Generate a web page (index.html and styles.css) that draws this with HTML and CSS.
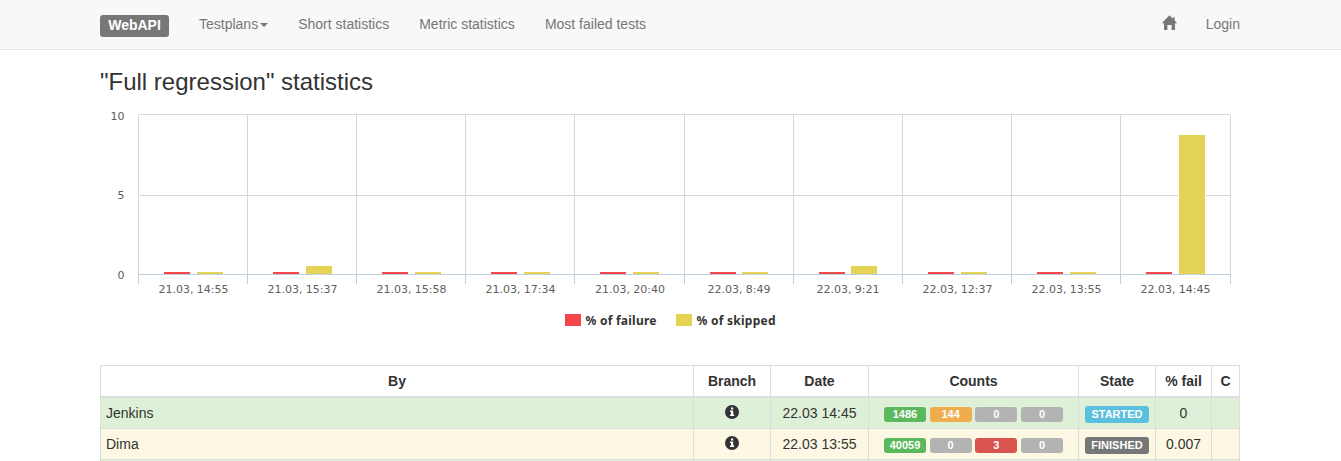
FILE: index.html
```html
<!DOCTYPE html>
<html lang="en">
<head>
<meta charset="utf-8">
<title>WebAPI statistics</title>
<link rel="stylesheet" href="styles.css">
</head>
<body>
<nav class="navbar">
  <div class="container nav-row">
    <a class="brand">WebAPI</a>
    <a class="nav-link">Testplans<span class="caret"></span></a>
    <a class="nav-link">Short statistics</a>
    <a class="nav-link">Metric statistics</a>
    <a class="nav-link">Most failed tests</a>
    <a class="nav-home"><svg width="16" height="16" viewBox="0 0 16 16"><path d="M7.400 .3 10.800 3.700V2.200h1.800v3.300L15 7.900v.4h-2V15H9.600v-5H5.400v5H2V8.300H0v-.4z"/></svg></a>
    <a class="nav-link nav-login">Login</a>
  </div>
</nav>
<main class="container">
  <h3 class="title">"Full regression" statistics</h3>
  <svg class="chart" width="1140" height="240" viewBox="100 100 1140 240">
    <g class="grid">
      <path d="M139 114.5H1230M139 195.5H1230"/>
      <path d="M138.5 115V274M247.500 115V274M356.500 115V274M465.500 115V274M574.500 115V274M684.500 115V274M793.500 115V274M902.500 115V274M1011.500 115V274M1120.500 115V274M1230.500 115V274"/>
    </g>
    <g class="fail">
      <path d="M164 272h26v2h-26zM273 272h26v2h-26zM382 272h26v2h-26zM491 272h26v2h-26zM600 272h26v2h-26zM710 272h26v2h-26zM819 272h26v2h-26zM928 272h26v2h-26zM1037 272h26v2h-26zM1146 272h26v2h-26z"/>
      <rect x="565" y="314" width="16" height="12"/>
    </g>
    <rect class="halo" x="1178" y="134" width="28" height="140"/>
    <g class="skip">
      <path d="M197 272h26v2h-26zM306 266h26v8h-26zM415 272h26v2h-26zM524 272h26v2h-26zM633 272h26v2h-26zM742 272h26v2h-26zM851 266h26v8h-26zM961 272h26v2h-26zM1070 272h26v2h-26zM1179 135h26v139h-26z"/>
      <rect x="676" y="314" width="16" height="12"/>
    </g>
    <path class="axis" d="M138 274.500H1231M138.500 274V284M247.500 274V284M356.500 274V284M465.500 274V284M574.500 274V284M684.500 274V284M793.500 274V284M902.500 274V284M1011.500 274V284M1120.500 274V284M1230.500 274V284"/>
    <g class="y-labels">
      <text x="124.500" y="120">10</text><text x="124.500" y="199">5</text><text x="124.500" y="279">0</text>
    </g>
    <g class="x-labels">
      <text x="158.500" y="293" textLength="70">21.03, 14:55</text>
      <text x="267.500" y="293" textLength="70">21.03, 15:37</text>
      <text x="376.500" y="293" textLength="70">21.03, 15:58</text>
      <text x="485.500" y="293" textLength="70">21.03, 17:34</text>
      <text x="595" y="293" textLength="70">21.03, 20:40</text>
      <text x="707.500" y="293" textLength="63">22.03, 8:49</text>
      <text x="816.500" y="293" textLength="63">22.03, 9:21</text>
      <text x="922.500" y="293" textLength="70">22.03, 12:37</text>
      <text x="1031.500" y="293" textLength="70">22.03, 13:55</text>
      <text x="1140.500" y="293" textLength="70">22.03, 14:45</text>
    </g>
    <g class="legend">
      <text x="585.500" y="325" textLength="71">% of failure</text>
      <text x="696.500" y="325" textLength="79">% of skipped</text>
    </g>
  </svg>
  <table class="results">
    <colgroup><col class="c-by"><col class="c-branch"><col class="c-date"><col class="c-counts"><col class="c-state"><col class="c-fail"><col class="c-last"></colgroup>
    <thead><tr><th>By</th><th>Branch</th><th>Date</th><th>Counts</th><th>State</th><th>% fail</th><th>C</th></tr></thead>
    <tbody>
      <tr class="success">
        <td class="by">Jenkins</td>
        <td><svg class="info" width="14" height="14" viewBox="0 0 14 14"><circle cx="7" cy="7" r="7"/><path d="M6 2.500h2.200v2H6zM5 5.500h3.200v4h1V11H5V9.500h1V7H5z"/></svg></td>
        <td>22.03 14:45</td>
        <td><div class="counts"><span class="label green">1486</span><span class="label orange">144</span><span class="label">0</span><span class="label">0</span></div></td>
        <td><span class="state started">STARTED</span></td>
        <td>0</td><td></td>
      </tr>
      <tr class="warning">
        <td class="by">Dima</td>
        <td><svg class="info" width="14" height="14" viewBox="0 0 14 14"><circle cx="7" cy="7" r="7"/><path d="M6 2.500h2.200v2H6zM5 5.500h3.200v4h1V11H5V9.500h1V7H5z"/></svg></td>
        <td>22.03 13:55</td>
        <td><div class="counts"><span class="label green">40059</span><span class="label">0</span><span class="label red">3</span><span class="label">0</span></div></td>
        <td><span class="state">FINISHED</span></td>
        <td>0.007</td><td></td>
      </tr>
      <tr class="success partial"><td></td><td></td><td></td><td></td><td></td><td></td><td></td></tr>
    </tbody>
  </table>
</main>
</body>
</html>
```
FILE: styles.css
```css
* { box-sizing: border-box; }
html { height: 100%; overflow: hidden; }
body { margin: 0; height: 461px; overflow: hidden; background: #fff; color: #333; font: 14px/20px "Liberation Sans", Arial, sans-serif; }
.container { width: 1140px; margin-left: 100px; }
.navbar { height: 50px; background: #f8f8f8; border-bottom: 1px solid #e7e7e7; color: #777; }
.nav-row { display: flex; align-items: flex-start; }
.brand { width: 69px; height: 22px; margin: 15px 15px 0 0; border-radius: 3px; background: #777; color: #fff; font-size: 14px; line-height: 20px; font-weight: bold; text-align: center; }
.nav-link { padding: 14px 15px 0; white-space: nowrap; }
.caret { display: inline-block; margin-left: 2px; vertical-align: middle; border-top: 4px solid #777; border-left: 4px solid transparent; border-right: 4px solid transparent; }
.nav-home { margin: 15px 13px 0 auto; height: 16px; fill: #777; }
.nav-home svg { display: block; }
.nav-login { padding-right: 0; }
.title { margin: 19px 0 5px; font-size: 24px; line-height: 26px; font-weight: normal; }
.chart { display: block; font-family: "Noto Sans", "DejaVu Sans", sans-serif; }
.grid { fill: none; stroke: #d8d8d8; }
.axis { fill: none; stroke: #c0d0e0; }
.fail { fill: #f7464a; }
.skip { fill: #e5d355; }
.halo { fill: #fff; }
.y-labels, .x-labels { font-family: "DejaVu Sans", sans-serif; font-size: 11px; fill: #606060; }
.y-labels { text-anchor: end; }
.legend { font-size: 12px; font-weight: bold; fill: #333; }
.results { width: 1140px; margin-top: 25px; table-layout: fixed; border-collapse: collapse; text-align: center; }
.results th, .results td { height: 31px; padding: 5px; border: 1px solid #ddd; white-space: nowrap; vertical-align: top; line-height: 20px; }
.results th { border-bottom-width: 2px; }
.results .by { text-align: left; }
.results .partial td { height: 1px; padding: 0; border-bottom: 0; }
.c-by { width: 593px; }
.c-branch, .c-state { width: 77px; }
.c-date { width: 98px; }
.c-counts { width: 210px; }
.c-fail { width: 56px; }
.c-last { width: 28px; }
.success { background: #dff0d8; }
.warning { background: #fcf8e3; }
.info { display: block; margin: 2px auto 0; fill: #333; }
.info path { fill: #fff; }
.counts { display: flex; justify-content: center; gap: 3.700px; padding-top: 4px; }
.label { width: 42px; height: 15px; border-radius: 3px; background: #b3b3b3; color: #fff; font-size: 11px; line-height: 15px; font-weight: bold; }
.green { background: #5cb85c; }
.orange { background: #f0ad4e; }
.red { background: #d9534f; }
.state { display: block; width: 64px; height: 17px; margin: 3px auto 0; border-radius: 3px; background: #777; color: #fff; font-size: 11px; line-height: 17px; font-weight: bold; }
.started { background: #5bc0de; }
```
